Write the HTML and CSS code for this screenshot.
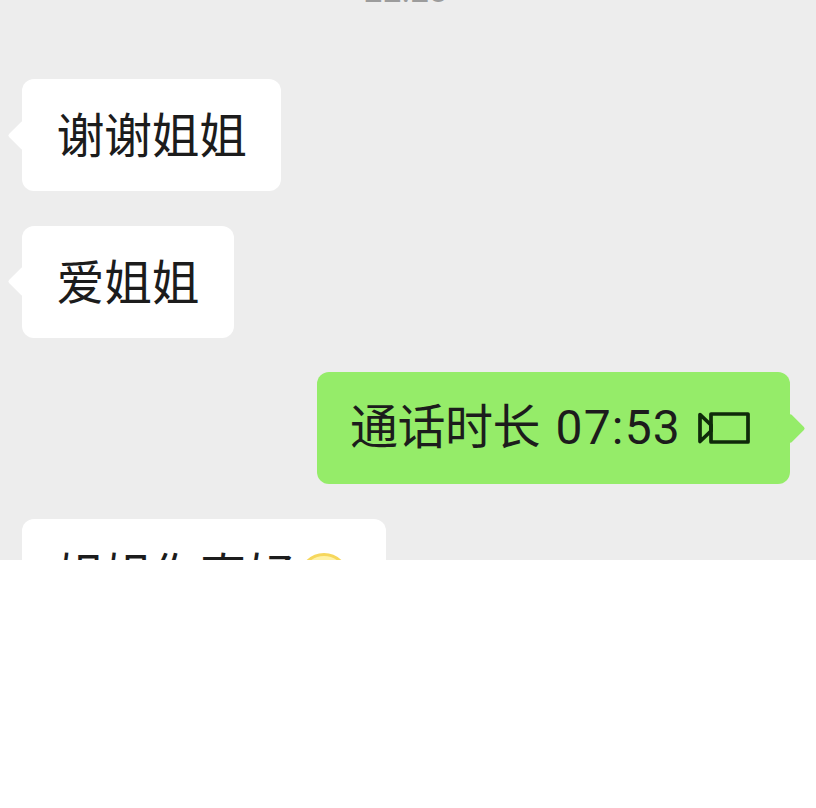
FILE: index.html
```html
<!DOCTYPE html>
<html lang="zh">
<head>
<meta charset="utf-8">
<title>聊天</title>
<link rel="stylesheet" href="styles.css">
</head>
<body>
<main class="chat">
  <div class="time">22:23</div>
  <div class="msg left"><div class="bubble">谢谢姐姐</div></div>
  <div class="msg left"><div class="bubble">爱姐姐</div></div>
  <div class="msg right"><div class="bubble green"><span class="call">通话时长 <span class="digits">07:53</span></span>
    <svg class="cam" width="52" height="32" viewBox="0 0 52 32" fill="none" stroke="#0f2a0a" stroke-width="3.7" stroke-linejoin="round"><path d="M2 2.5 L13 13 V19 L2 29.5 Z"/><rect x="13" y="2" width="37" height="28"/></svg>
  </div></div>
  <div class="msg left"><div class="bubble wide">姐姐你真好<span class="emoji"></span></div></div>
</main>
</body>
</html>
```
FILE: styles.css
```css
html, body {
  margin: 0;
  padding: 0;
  background: #fff;
}
.chat {
  height: 560px;
  overflow: hidden;
  background: #ededed;
  display: flex;
  flex-direction: column;
  gap: 34.5px;
  padding: 0 26px 0 22px;
  box-sizing: border-box;
  font-family: "Roboto", "Noto Sans CJK SC", sans-serif;
  color: #1c1c1c;
}
.time {
  height: 30px;
  margin-top: -18px;
  margin-bottom: 32.5px;
  line-height: 18px;
  text-align: center;
  font-family: "Roboto", sans-serif;
  font-size: 33px;
  letter-spacing: 0.5px;
  color: #9c9c9c;
  flex: none;
}
.msg {
  display: flex;
  flex: none;
}
.right {
  justify-content: flex-end;
}
.bubble {
  position: relative;
  height: 112px;
  box-sizing: border-box;
  padding: 4px 34.5px 0;
  display: flex;
  align-items: center;
  background: #fff;
  border-radius: 12px;
  font-size: 48px;
  letter-spacing: -0.5px;
  line-height: 108px;
  white-space: nowrap;
}
.bubble::before {
  content: "";
  position: absolute;
  left: -10.5px;
  top: 45.5px;
  width: 21px;
  height: 21px;
  background: inherit;
  transform: rotate(45deg);
  border-radius: 2px;
}
.green {
  background: #95ec69;
  padding: 0 40px 0 33px;
  gap: 17px;
}
.green::before {
  left: auto;
  right: -10.5px;
}
.digits {
  letter-spacing: 1.2px;
  margin-left: 4px;
}
.call {
  flex: none;
}
.cam {
  display: block;
  flex: none;
}
.wide {
  padding-right: 37px;
}
.emoji {
  display: inline-block;
  width: 50px;
  height: 50px;
  margin-left: 5px;
  margin-top: 3px;
  border-radius: 50%;
  background: #fff2a6;
  border: 3px solid #f6d75c;
  box-sizing: border-box;
  flex: none;
}
```
